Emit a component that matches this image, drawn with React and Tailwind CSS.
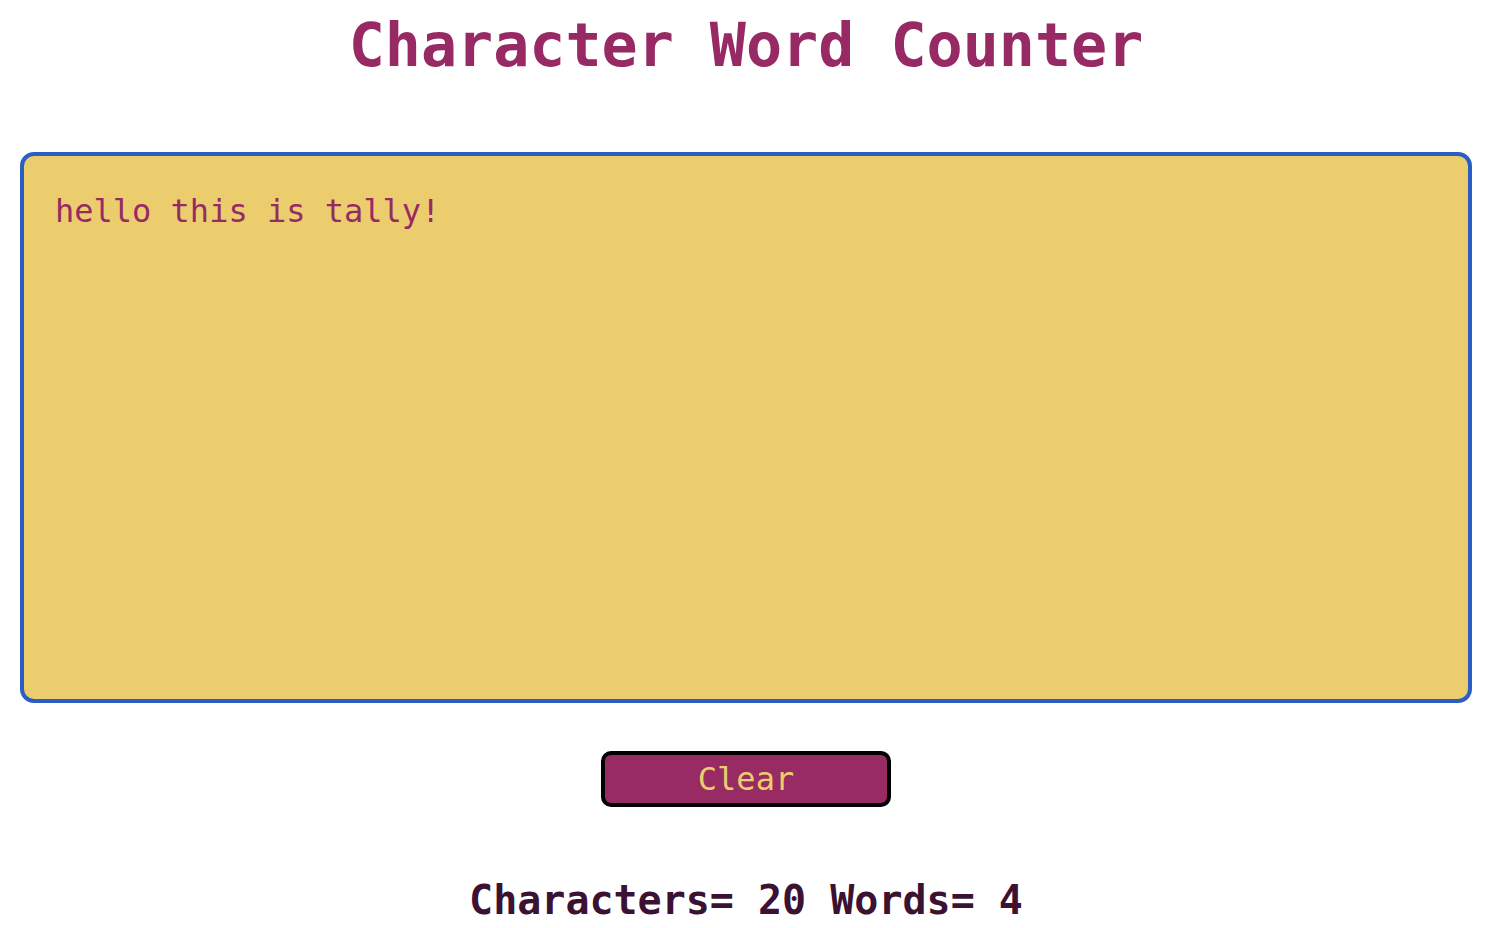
import { useState } from 'react';

export default function App() {
  const [text, setText] = useState('hello this is tally!');

  const words = text.trim() === '' ? 0 : text.trim().split(/\s+/).length;

  return (
    <div className="w-[1492px] flex flex-col items-center bg-white min-h-[928px] font-['DejaVu_Sans_Mono',monospace]">
      <h1 className="text-[60px] leading-[90px] font-bold text-[#972a64]">Character Word Counter</h1>

      <textarea
        autoFocus
        onFocus={e => {
          const len = e.target.value.length;
          e.target.setSelectionRange(len, len);
        }}
        value={text}
        onChange={e => setText(e.target.value)}
        className="mt-[62px] w-[1452px] h-[551px] resize-none rounded-[14px] border-[4px] border-[#2a5ec4] bg-[#ebcd6e] px-[31px] py-[31px] text-[32px] leading-[1.5] text-[#972a64] caret-[#972a64] outline-none font-['DejaVu_Sans_Mono',monospace]"
      />

      <button
        onClick={() => setText('')}
        className="mt-[48px] w-[290px] h-[56px] rounded-[10px] border-[4px] border-black bg-[#982b63] text-[32px] leading-none text-[#ebcd6e] font-['DejaVu_Sans_Mono',monospace]"
      >
        Clear
      </button>

      <p className="mt-[69px] text-[40px] leading-[48px] font-bold text-[#3b1232]">
        Characters= {text.length} Words= {words}
      </p>
    </div>
  );
}
